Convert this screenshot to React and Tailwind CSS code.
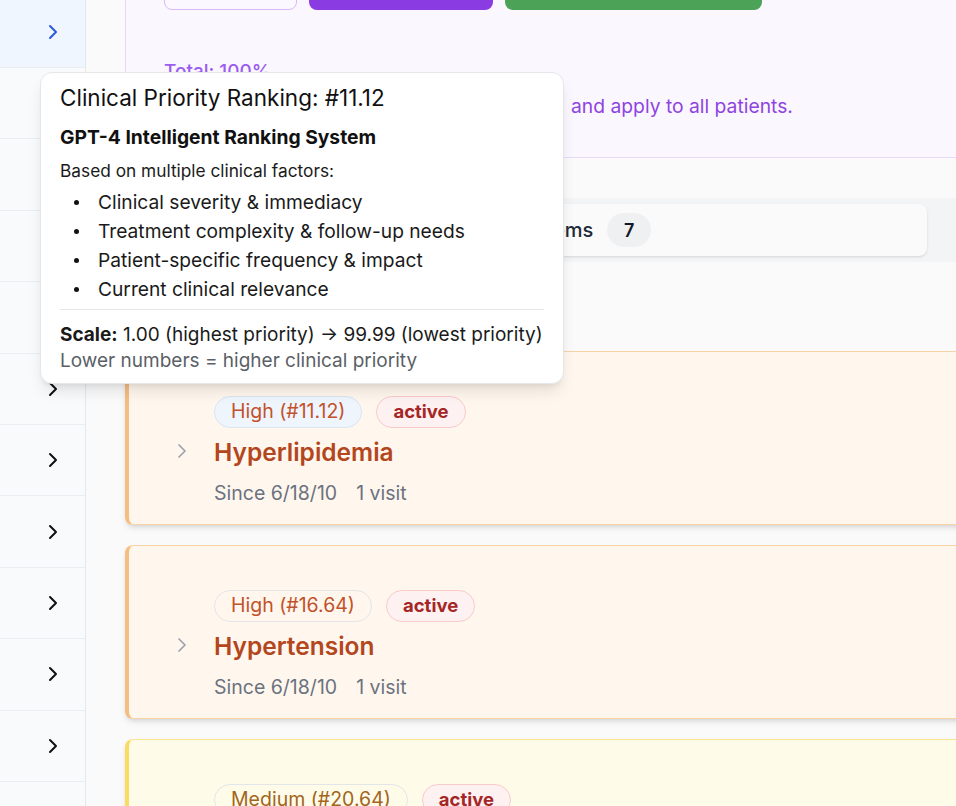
import React from "react";
import { ChevronRight, ClipboardList } from "lucide-react";

const problems = [
  { id: 1, name: "Hyperlipidemia", level: "High", rank: "11.12", since: "6/18/10", visits: 1, tone: "orange", hover: true },
  { id: 2, name: "Hypertension", level: "High", rank: "16.64", since: "6/18/10", visits: 1, tone: "orange" },
  { id: 3, name: "Type 2 diabetes mellitus", level: "Medium", rank: "20.64", since: "6/18/10", visits: 1, tone: "yellow" },
];

const tones = {
  orange: {
    card: "bg-[#fff7ed] border-[#f9d3a8] border-l-[#f5bd7f]",
    pill: "text-[#c2522a]",
    title: "text-[#b4461e]",
  },
  yellow: {
    card: "bg-[#fefce8] border-[#fbe58c] border-l-[#fbdc62]",
    pill: "text-[#a2651e]",
    title: "text-[#a16207]",
  },
};

const factors = [
  "Clinical severity & immediacy",
  "Treatment complexity & follow-up needs",
  "Patient-specific frequency & impact",
  "Current clinical relevance",
];

function ProblemCard({ p }) {
  const t = tones[p.tone];
  return (
    <div className={`flex items-center rounded-lg border border-l-4 shadow-md pl-[41px] pt-[44px] pb-[19px] ${t.card}`}>
      <ChevronRight size={24} strokeWidth={1.75} className="text-[#9ca3af] shrink-0" />
      <div className="ml-5">
        <div className="flex items-center gap-[14px]">
          <span
            className={`h-8 px-4 rounded-full border flex items-center text-[19.5px] ${t.pill} ${
              p.hover ? "bg-[#eff5fd] border-[#dbe5f1]" : "border-[#e3e5e9]"
            }`}
          >
            {p.level} (#{p.rank})
          </span>
          <span className="h-8 px-4 rounded-full border border-[#fbcaca] bg-[#fef1f1] flex items-center text-[18.5px] font-bold text-[#a52626]">
            active
          </span>
        </div>
        <h3 className={`mt-2 text-[24.5px] leading-8 font-semibold ${t.title}`}>{p.name}</h3>
        <div className="mt-[13px] flex gap-[19px] text-[19.5px] leading-6 text-[#6b7280]">
          <span>Since {p.since}</span>
          <span>{p.visits} visit</span>
        </div>
      </div>
    </div>
  );
}

export default function App() {
  return (
    <div className="relative flex h-[806px] w-[956px] overflow-hidden bg-[#fafafa] font-['Inter',sans-serif] text-[#111827]">
      <aside className="w-[86px] shrink-0 border-r border-[#e5e7eb] bg-[#f8fafc]">
        <div className="-mt-[3.4px]">
          {Array.from({ length: 12 }).map((_, i) => (
            <div
              key={i}
              className={`h-[71.4px] flex items-center justify-end pr-5 border-b border-[#eaedf1] ${
                i === 0 ? "bg-[#eff6ff]" : ""
              }`}
            >
              <ChevronRight size={24} strokeWidth={2} className={i === 0 ? "text-[#2b5bd9]" : "text-[#111111]"} />
            </div>
          ))}
        </div>
      </aside>

      <main className="shrink-0 w-[1400px] pl-[39px]">
        <section className="-mt-[40px] rounded-lg border border-[#e8d9fb] bg-[#faf7fe] px-[38px] pt-[5px] pb-[37px]">
          <div className="flex gap-3">
            <button className="h-11 w-[133px] rounded-lg border border-[#d8b9fc] bg-[#fbf9ff] text-[#7e3bd6] text-[16px]">
              Reset
            </button>
            <button className="h-11 w-[184px] rounded-lg bg-[#8a3be2] text-white text-[16px]">Save Weights</button>
            <button className="h-11 w-[257px] rounded-lg bg-[#4ca256] text-white text-[16px]">Apply to All Patients</button>
          </div>
          <p className="mt-[48px] text-[19px] leading-7 font-medium text-[#9b5cf0]">Total: 100%</p>
          <p className="mt-[6px] text-[19.3px] leading-7 text-[#8f44e1] whitespace-nowrap">
            <span className="inline-block w-[396px] mr-[11px] overflow-hidden align-bottom">Adjust each clinical factor weight</span>
            and apply to all patients.
          </p>
        </section>

        <div className="mt-10 h-16 bg-[#f3f4f6] rounded-lg p-1.5 flex gap-1.5">
          <div className="w-[796px] shrink-0 rounded-lg bg-[#fafafa] shadow-sm flex items-center justify-center gap-[14px] pl-[3px]">
            <div className="flex items-center gap-2">
              <ClipboardList size={20} className="text-[#374151]" />
              <span className="text-[20px] font-medium text-[#1f2937]">Active Problems</span>
            </div>
            <span className="h-[34px] w-[44px] rounded-full bg-[#eff0f2] flex items-center justify-center text-[18px] font-semibold">
              7
            </span>
          </div>
          <div className="flex-1 flex items-center justify-center text-[20px] font-medium text-[#6b7280]">Medications</div>
        </div>

        <div className="h-[89px] flex items-center">
          <h2 className="text-[18px] font-semibold text-[#374151]">Problem List</h2>
        </div>

        <div className="flex flex-col gap-5">
          {problems.map((p) => (
            <ProblemCard key={p.id} p={p} />
          ))}
        </div>
      </main>

      <div className="absolute left-[40px] top-[72px] w-[524px] rounded-xl border border-[#e5e7eb] bg-white px-[19px] pt-[11px] pb-[11px] shadow-lg">
        <h4 className="text-[22.5px] leading-7 text-[#111111]">Clinical Priority Ranking: #11.12</h4>
        <p className="mt-[11px] text-[19.3px] leading-[29px] font-bold text-[#111111]">GPT-4 Intelligent Ranking System</p>
        <p className="mt-[4px] text-[17.3px] leading-[29px] text-[#1a1a1a]">Based on multiple clinical factors:</p>
        <ul className="mt-[3px]">
          {factors.map((f) => (
            <li key={f} className="flex items-center text-[19.2px] leading-[29px] text-[#1a1a1a]">
              <span className="w-[38px] shrink-0 pl-[13.5px]">
                <span className="block w-[5px] h-[5px] rounded-full bg-[#111111]" />
              </span>
              {f}
            </li>
          ))}
        </ul>
        <div className="mt-[5px] border-t border-[#e5e7eb]" />
        <p className="mt-[10px] text-[19px] leading-[29px] text-[#1a1a1a]">
          <span className="font-bold">Scale:</span> 1.00 (highest priority) → 99.99 (lowest priority)
        </p>
        <p className="text-[19px] leading-[23px] text-[#5b5f66]">Lower numbers = higher clinical priority</p>
      </div>
    </div>
  );
}
